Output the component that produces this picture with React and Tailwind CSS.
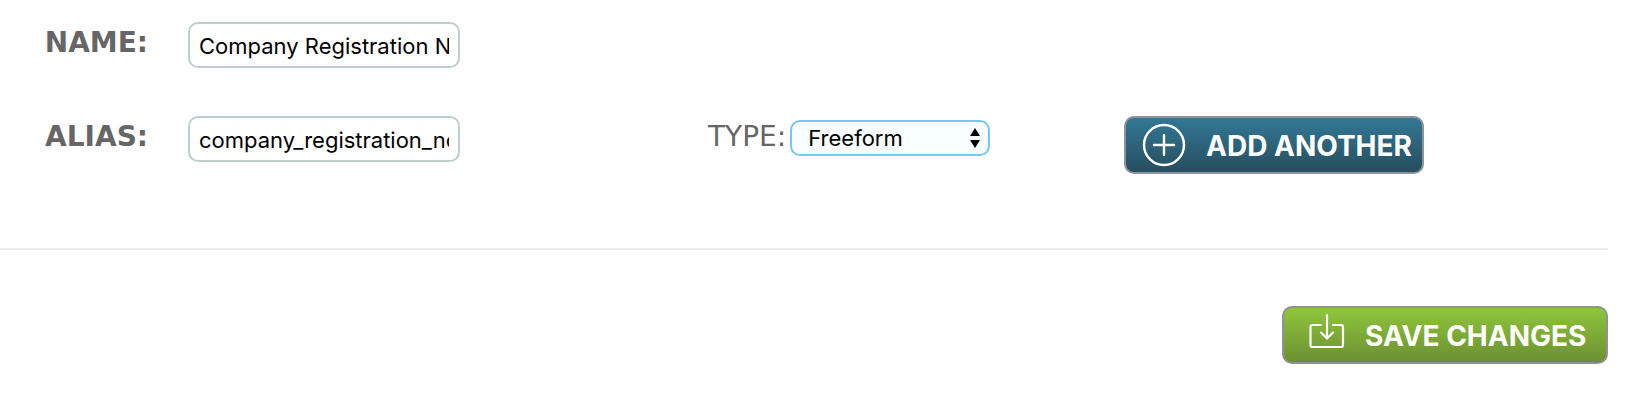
import { useState } from "react";

const labelClass = "pr-[40px] text-right font-['DejaVu_Sans'] text-[28px] leading-[42px] font-bold text-[#666]";
const inputClass =
  "h-[46px] w-[272px] rounded-[10px] border-2 border-[#bfcdcd] bg-white px-[9px] pt-[2px] font-['Inter'] text-[22px] text-black outline-none";
const buttonClass =
  "flex h-[58px] items-center rounded-[10px] border-2 border-[#8c9499] bg-gradient-to-b font-['Inter'] text-[28px] font-bold whitespace-nowrap text-white";

function PlusCircleIcon() {
  return (
    <svg width="44" height="44" viewBox="0 0 44 44" fill="none" stroke="currentColor" strokeWidth="2.4" strokeLinecap="round" aria-hidden="true">
      <circle cx="22" cy="22" r="20" />
      <path d="M22 12v20M12 22h20" />
    </svg>
  );
}

function SaveIcon() {
  return (
    <svg width="36" height="36" viewBox="0 0 36 36" fill="none" stroke="currentColor" strokeWidth="2.2" strokeLinecap="round" strokeLinejoin="round" aria-hidden="true">
      <path d="M12 12H3.500Q1.500 12 1.500 14V32Q1.500 34 3.500 34H32Q34 34 34 32V14Q34 12 32 12H24" />
      <path d="M18 2v23M12 19.500l6 6 6-6" />
    </svg>
  );
}

export default function App() {
  const [name, setName] = useState("Company Registration Number");
  const [alias, setAlias] = useState("company_registration_not_set");
  const [type, setType] = useState("Freeform");

  return (
    <form className="bg-white pr-[26px] pb-9" onSubmit={(e) => e.preventDefault()}>
      <div className="grid grid-cols-[188px_520fr_416fr_484fr] items-start gap-y-12 border-b-2 border-[#eee] pt-[22px] pb-[74px]">
        <label htmlFor="name" className={labelClass}>NAME:</label>
        <div className="col-span-3 flex">
          <input id="name" type="text" className={inputClass} value={name} onChange={(e) => setName(e.target.value)} />
        </div>

        <label htmlFor="alias" className={labelClass}>ALIAS:</label>
        <div className="flex">
          <input id="alias" type="text" className={inputClass} value={alias} onChange={(e) => setAlias(e.target.value)} />
        </div>
        <div className="flex items-start gap-1">
          <label htmlFor="type" className="font-['DejaVu_Sans'] text-[28px] leading-[42px] text-[#666]">TYPE:</label>
          <div className="relative mt-1">
            <select
              id="type"
              className="block h-9 w-[200px] appearance-none rounded-[10px] border-2 border-[#78c5ef] bg-[#f8fdff] pl-4 font-['Inter'] text-[22px] leading-8 text-black outline-none"
              value={type}
              onChange={(e) => setType(e.target.value)}
            >
              <option>Freeform</option>
              <option>Dropdown</option>
              <option>Date</option>
            </select>
            <svg className="pointer-events-none absolute top-2 right-[10px]" width="10" height="20" viewBox="0 0 10 20" aria-hidden="true">
              <path d="M5 0l5 8H0zM5 20l5-8H0z" />
            </svg>
          </div>
        </div>
        <div className="flex">
          <button type="button" className={`${buttonClass} w-[300px] gap-5 from-[#337896] to-[#264e5f] pl-4`}>
            <PlusCircleIcon />
            <span className="pt-[2px]">ADD ANOTHER</span>
          </button>
        </div>
      </div>

      <div className="flex justify-end pt-14">
        <button type="submit" className={`${buttonClass} w-[326px] gap-5 from-[#8fc63d] to-[#6c9031] pl-[25px]`}>
          <span className="pb-2"><SaveIcon /></span>
          <span className="pt-[2px]">SAVE CHANGES</span>
        </button>
      </div>
    </form>
  );
}
